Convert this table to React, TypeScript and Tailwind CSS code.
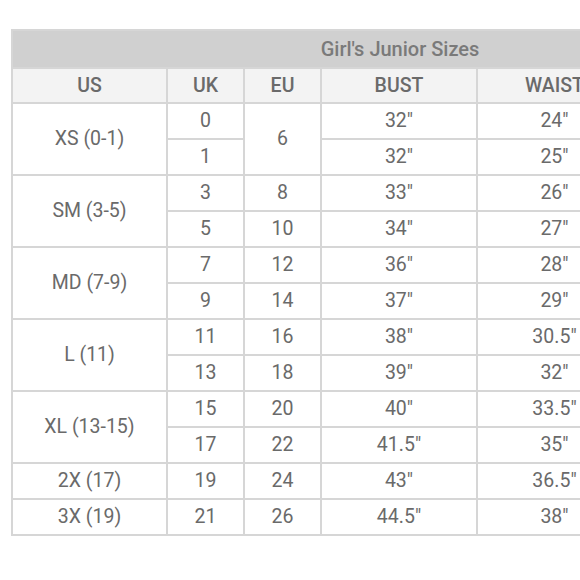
import React from 'react';

interface SizeGroup {
  us: string;
  eu?: string;
  rows: { uk: string; eu?: string; bust: string; waist: string; hips: string }[];
}

const groups: SizeGroup[] = [
  { us: 'XS (0-1)', eu: '6', rows: [
    { uk: '0', bust: '32"', waist: '24"', hips: '34"' },
    { uk: '1', bust: '32"', waist: '25"', hips: '35"' },
  ] },
  { us: 'SM (3-5)', rows: [
    { uk: '3', eu: '8', bust: '33"', waist: '26"', hips: '36"' },
    { uk: '5', eu: '10', bust: '34"', waist: '27"', hips: '37"' },
  ] },
  { us: 'MD (7-9)', rows: [
    { uk: '7', eu: '12', bust: '36"', waist: '28"', hips: '38"' },
    { uk: '9', eu: '14', bust: '37"', waist: '29"', hips: '39"' },
  ] },
  { us: 'L (11)', rows: [
    { uk: '11', eu: '16', bust: '38"', waist: '30.5"', hips: '40"' },
    { uk: '13', eu: '18', bust: '39"', waist: '32"', hips: '41"' },
  ] },
  { us: 'XL (13-15)', rows: [
    { uk: '15', eu: '20', bust: '40"', waist: '33.5"', hips: '42"' },
    { uk: '17', eu: '22', bust: '41.5"', waist: '35"', hips: '43"' },
  ] },
  { us: '2X (17)', rows: [
    { uk: '19', eu: '24', bust: '43"', waist: '36.5"', hips: '44"' },
  ] },
  { us: '3X (19)', rows: [
    { uk: '21', eu: '26', bust: '44.5"', waist: '38"', hips: '45"' },
  ] },
];

const cell = 'border-2 border-[#d6d6d6] text-center align-middle p-0 whitespace-nowrap';

const App: React.FC = () => {
  return (
    <div className="w-[580px] h-[580px] overflow-hidden bg-white font-['Roboto',sans-serif] text-[19.5px] text-[#6a6a6a]">
      <div className="pt-[29px] pl-[11px]">
        <table className="border-collapse table-fixed w-[776px]">
          <colgroup>
            <col className="w-[155px]" />
            <col className="w-[77px]" />
            <col className="w-[77px]" />
            <col className="w-[156px]" />
            <col className="w-[155px]" />
            <col className="w-[156px]" />
          </colgroup>
          <thead>
            {/* title band */}
            <tr className="h-[38px]">
              <td colSpan={6} className={`${cell} bg-[#d0d0d0] text-[#7a7a7a] font-medium text-[20px]`}>
                Girl's Junior Sizes
              </td>
            </tr>
            <tr className="h-[35px] bg-[#f3f3f3]">
              {['US', 'UK', 'EU', 'BUST', 'WAIST', 'HIPS'].map((h) => (
                <td key={h} className={`${cell} font-medium`}>{h}</td>
              ))}
            </tr>
          </thead>
          <tbody>
            {groups.map((g) =>
              g.rows.map((r, i) => (
                <tr key={g.us + r.uk} className="h-[36px]">
                  {i === 0 && (
                    <td rowSpan={g.rows.length} className={cell}>{g.us}</td>
                  )}
                  <td className={cell}>{r.uk}</td>
                  {g.eu ? (
                    i === 0 && <td rowSpan={g.rows.length} className={cell}>{g.eu}</td>
                  ) : (
                    <td className={cell}>{r.eu}</td>
                  )}
                  <td className={cell}>{r.bust}</td>
                  <td className={cell}>{r.waist}</td>
                  <td className={cell}>{r.hips}</td>
                </tr>
              ))
            )}
          </tbody>
        </table>
      </div>
    </div>
  );
};

export default App;
